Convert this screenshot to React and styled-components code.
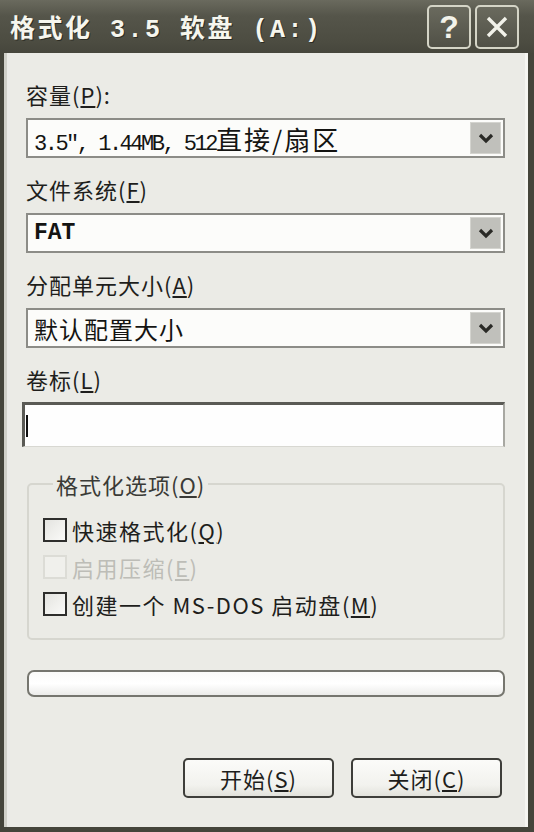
import React from "react"
import styled, { createGlobalStyle } from "styled-components"

const GlobalStyle = createGlobalStyle`
  html, body {
    margin: 0;
    padding: 0;
    background: #45453b;
  }
  body {
    font-family: "Noto Sans CJK SC", "Liberation Sans", sans-serif;
  }
`

const Key = ({ children }) => (
  <>
    (<Underline>{children}</Underline>)
  </>
)

const ChevronDown = () => (
  <svg width="16" height="12" viewBox="0 0 16 12">
    <path d="M2 3 L8 9 L14 3" fill="none" stroke="#2a2a26" strokeWidth="3.2" />
  </svg>
)

const CloseGlyph = () => (
  <svg width="24" height="24" viewBox="0 0 24 24">
    <path d="M3 3 L21 21 M21 3 L3 21" stroke="#f2f2ea" strokeWidth="3.4" />
  </svg>
)

const App = () => (
  <>
    <GlobalStyle />
    <Window>
      <TitleBar>
        <Title>格式化 3.5 软盘 (A:)</Title>
        <TitleButtons>
          <TitleButton>?</TitleButton>
          <TitleButton>
            <CloseGlyph />
          </TitleButton>
        </TitleButtons>
      </TitleBar>
      <Frame>
        <Body>
          <Label>
            容量<Key>P</Key>:
          </Label>
          <Combo>
            <ComboValue size={22} tight>
              3.5″, 1.44MB, 512<Wide big>直接/扇区</Wide>
            </ComboValue>
            <DropButton>
              <ChevronDown />
            </DropButton>
          </Combo>

          <Label spaced>
            文件系统<Key>F</Key>
          </Label>
          <Combo>
            <ComboValue size={23} bold>
              FAT
            </ComboValue>
            <DropButton>
              <ChevronDown />
            </DropButton>
          </Combo>

          <Label spaced>
            分配单元大小<Key>A</Key>
          </Label>
          <Combo>
            <ComboValue size={17}>
              <Wide>默认配置大小</Wide>
            </ComboValue>
            <DropButton>
              <ChevronDown />
            </DropButton>
          </Combo>

          <Label spaced>
            卷标<Key>L</Key>
          </Label>
          <TextInput>
            <Caret />
          </TextInput>

          <Group>
            <Legend>
              格式化选项<Key>O</Key>
            </Legend>
            <CheckRow>
              <CheckBox />
              <CheckText>
                快速格式化<Key>Q</Key>
              </CheckText>
            </CheckRow>
            <CheckRow>
              <CheckBox disabled />
              <CheckText disabled>
                启用压缩<Key>E</Key>
              </CheckText>
            </CheckRow>
            <CheckRow>
              <CheckBox />
              <CheckText>
                创建一个 MS-DOS 启动盘<Key>M</Key>
              </CheckText>
            </CheckRow>
          </Group>

          <Progress />

          <ButtonRow>
            <Button>
              开始<Key>S</Key>
            </Button>
            <Button>
              关闭<Key>C</Key>
            </Button>
          </ButtonRow>
        </Body>
      </Frame>
    </Window>
  </>
)

export default App

const Window = styled.div`
  width: 534px;
  height: 832px;
  display: flex;
  flex-direction: column;
  background: #45453b;
`

const TitleBar = styled.div`
  height: 53px;
  flex: none;
  display: flex;
  align-items: center;
  justify-content: space-between;
  padding: 0 15px 0 10px;
  background: linear-gradient(#6a6a5e, #55554a 30%, #4c4c41 80%, #46463c);
`

const Title = styled.div`
  color: #f6f6ee;
  font-family: "Liberation Mono", "Noto Sans CJK SC", monospace;
  font-weight: bold;
  font-size: 25px;
  letter-spacing: 2.5px;
  white-space: pre;
  text-shadow: 1px 1px 0 #2c2c24;
`

const TitleButtons = styled.div`
  display: flex;
  gap: 4px;
`

const TitleButton = styled.div`
  width: 40px;
  height: 40px;
  border: 2px solid #d4d4c6;
  border-radius: 5px;
  background: linear-gradient(#6a6a5e, #505046);
  display: flex;
  align-items: center;
  justify-content: center;
  color: #f2f2ea;
  font-family: "Liberation Sans", sans-serif;
  font-weight: bold;
  font-size: 32px;
  line-height: 1;
`

const Frame = styled.div`
  flex: 1;
  display: flex;
  padding: 0 6px 5px 4px;
`

const Body = styled.div`
  flex: 1;
  display: flex;
  flex-direction: column;
  background: #ebebe6;
  border-left: 3px solid #d0d0c8;
  border-right: 3px solid #f6f6f2;
  padding: 29px 20px 0 19px;
`

const Label = styled.div`
  font-size: 22px;
  line-height: 24px;
  color: #1e1e1c;
  letter-spacing: 1px;
  margin-top: ${(p) => (p.spaced ? "19px" : "0")};
`

const Underline = styled.span`
  text-decoration: underline;
  text-underline-offset: 2px;
`

const Combo = styled.div`
  margin-top: 12px;
  height: 40px;
  box-sizing: border-box;
  border: 2px solid #8c8c87;
  background: #fcfcfa;
  display: flex;
  align-items: center;
  padding: 0 2px 0 6px;
`

const ComboValue = styled.span`
  flex: 1;
  font-family: "Liberation Mono", "Noto Sans CJK SC", monospace;
  font-size: ${(p) => p.size}px;
  font-weight: ${(p) => (p.bold ? "bold" : "normal")};
  letter-spacing: ${(p) => (p.tight ? "-2.5px" : "0")};
  color: #141412;
  white-space: pre;
`

const Wide = styled.span`
  font-family: "Noto Sans CJK SC", sans-serif;
  font-size: ${(p) => (p.big ? "26px" : "24px")};
  letter-spacing: ${(p) => (p.big ? "2px" : "1px")};
`

const DropButton = styled.span`
  width: 31px;
  height: 32px;
  box-sizing: border-box;
  background: #c0c0bb;
  border: 1px solid #d4d4cf;
  display: flex;
  align-items: center;
  justify-content: center;
`

const TextInput = styled.div`
  margin: 11px 0 0 -4px;
  height: 45px;
  box-sizing: border-box;
  background: #fefefe;
  border-top: 3px solid #5a5a55;
  border-left: 3px solid #5a5a55;
  border-right: 2px solid #a8a8a2;
  border-bottom: 1px solid #d8d8d2;
  display: flex;
  align-items: center;
  padding-left: 1px;
`

const Caret = styled.span`
  width: 2px;
  height: 22px;
  background: #111;
`

const Group = styled.fieldset`
  margin: 25px 0 0 1px;
  padding: 15px 0 16px 14px;
  border: 2px solid #d6d6cf;
  border-radius: 5px;
  display: flex;
  flex-direction: column;
`

const Legend = styled.legend`
  margin-left: 10px;
  padding: 0 3px;
  font-size: 22px;
  line-height: 24px;
  color: #3a3a36;
  letter-spacing: 1px;
`

const CheckRow = styled.div`
  height: 37px;
  display: flex;
  align-items: center;
  gap: 5px;
`

const CheckBox = styled.span`
  width: 24px;
  height: 24px;
  box-sizing: border-box;
  border: 2px solid ${(p) => (p.disabled ? "#dcdcd6" : "#2e2e2c")};
  background: ${(p) =>
    p.disabled ? "#f0f0ec" : "linear-gradient(135deg, #e4e4e0, #fafaf8)"};
`

const CheckText = styled.span`
  font-size: 22px;
  line-height: 24px;
  letter-spacing: 1.5px;
  color: ${(p) => (p.disabled ? "#bdbdb7" : "#1e1e1c")};
`

const Progress = styled.div`
  margin: 30px 0 0 1px;
  height: 27px;
  box-sizing: border-box;
  border: 2px solid #76766f;
  border-radius: 7px;
  background: linear-gradient(#fbfbf9, #ffffff 50%, #ececea);
`

const ButtonRow = styled.div`
  margin-top: 61px;
  display: flex;
  justify-content: flex-end;
  gap: 17px;
  padding-right: 3px;
`

const Button = styled.div`
  width: 151px;
  height: 40px;
  box-sizing: border-box;
  border: 2px solid #3e3e3a;
  border-radius: 5px;
  background: linear-gradient(#fbfbf9, #f2f2ee 70%, #e2e2dc);
  display: flex;
  align-items: center;
  justify-content: center;
  font-size: 22px;
  letter-spacing: 1px;
  color: #1e1e1c;
`
